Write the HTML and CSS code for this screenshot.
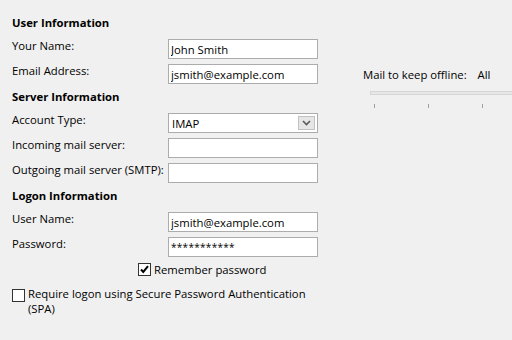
FILE: index.html
```html
<!DOCTYPE html>
<html lang="en">
<head>
    <meta charset="UTF-8">
    <meta name="viewport" content="width=device-width, initial-scale=1.0">
    <title>Account Settings</title>
    <link rel="stylesheet" href="styles.css">
</head>
<body>
    <div class="settings">
        <!-- Account details -->
        <form class="account-form">
            <h3 class="section-title">User Information</h3>
            <div class="field-row">
                <label for="your-name">Your Name:</label>
                <input type="text" id="your-name" class="text-box" value="John Smith">
            </div>
            <div class="field-row">
                <label for="email">Email Address:</label>
                <input type="text" id="email" class="text-box" value="jsmith@example.com">
            </div>

            <h3 class="section-title">Server Information</h3>
            <div class="field-row">
                <label>Account Type:</label>
                <div class="select-box">
                    <span>IMAP</span>
                    <span class="select-button">
                        <svg width="9" height="6" viewBox="0 0 9 6"><path d="M1 1 L4.5 4.5 L8 1" fill="none" stroke="#5a5a5a" stroke-width="1.6"/></svg>
                    </span>
                </div>
            </div>
            <div class="field-row">
                <label for="incoming">Incoming mail server:</label>
                <input type="text" id="incoming" class="text-box">
            </div>
            <div class="field-row">
                <label for="outgoing">Outgoing mail server (SMTP):</label>
                <input type="text" id="outgoing" class="text-box">
            </div>

            <h3 class="section-title">Logon Information</h3>
            <div class="field-row">
                <label for="user-name">User Name:</label>
                <input type="text" id="user-name" class="text-box" value="jsmith@example.com">
            </div>
            <div class="field-row">
                <label for="password">Password:</label>
                <input type="text" id="password" class="text-box password-box" value="***********">
            </div>

            <div class="check-row remember-row">
                <span class="check-box">
                    <svg width="11" height="11" viewBox="0 0 11 11"><path d="M2 5.5 L4.3 8 L9 2.2" fill="none" stroke="#000" stroke-width="2"/></svg>
                </span>
                <span>Remember password</span>
            </div>
            <div class="check-row spa-row">
                <span class="check-box"></span>
                <span class="check-text">Require logon using Secure Password Authentication (SPA)</span>
            </div>
        </form>

        <!-- Offline slider -->
        <div class="offline-panel">
            <div class="offline-label">
                <span>Mail to keep offline:</span>
                <span class="offline-value">All</span>
            </div>
            <div class="slider-track"></div>
            <div class="slider-ticks">
                <span></span>
                <span></span>
                <span></span>
            </div>
        </div>
    </div>
</body>
</html>
```

FILE: styles.css
```css
body {
    margin: 0;
    padding: 0;
    background-color: #f0f0f0;
    color: #000;
    font-family: "Open Sans", "Liberation Sans", sans-serif;
    font-size: 11.3px;
}

.settings {
    display: flex;
    padding-left: 12px;
}

.account-form {
    width: 306px;
    padding-top: 15px;
}

.section-title {
    margin: 0 0 9px 0;
    font-size: 11.3px;
    font-weight: bold;
    line-height: 15px;
}

.field-row {
    display: grid;
    grid-template-columns: 156px 150px;
    align-items: start;
    height: 20px;
    margin-bottom: 5px;
}

.field-row label {
    line-height: 13px;
    white-space: nowrap;
}

.text-box {
    box-sizing: border-box;
    width: 150px;
    height: 20px;
    margin: 0;
    padding: 0 2px;
    border: 1px solid #acacac;
    background-color: #fff;
    font-family: inherit;
    font-size: 11.3px;
    color: #000;
    outline: none;
}

.password-box {
    font-size: 10px;
    letter-spacing: 0.3px;
}

.select-box {
    box-sizing: border-box;
    display: flex;
    align-items: center;
    justify-content: space-between;
    width: 150px;
    height: 20px;
    padding: 0 2px 0 3px;
    border: 1px solid #acacac;
    background-color: #fff;
}

.select-button {
    box-sizing: border-box;
    display: flex;
    align-items: center;
    justify-content: center;
    width: 17px;
    height: 14px;
    border: 1px solid #c2c2c2;
    background-color: #e6e6e6;
}

.check-row {
    display: flex;
    align-items: flex-start;
    gap: 3px;
    line-height: 15px;
}

.check-box {
    box-sizing: border-box;
    display: flex;
    align-items: center;
    justify-content: center;
    flex: none;
    width: 13px;
    height: 13px;
    border: 1px solid #333;
    background-color: #fff;
}

.remember-row {
    margin-left: 126px;
}

.remember-row .check-box {
    margin-top: 1px;
}

.spa-row {
    margin-top: 9px;
}

.spa-row .check-box {
    margin-top: 3px;
}

.check-text {
    width: 290px;
}

.offline-panel {
    flex: 1;
    margin-left: 45px;
    padding-top: 67px;
}

.offline-label {
    line-height: 15px;
    white-space: nowrap;
}

.offline-value {
    margin-left: 8px;
}

.slider-track {
    height: 2px;
    margin: 9px 0 0 7px;
    border: 1px solid #d6d6d6;
    border-right: none;
    background-color: #e7e7e7;
}

.slider-ticks {
    display: flex;
    gap: 53px;
    margin: 9px 0 0 11px;
}

.slider-ticks span {
    width: 1px;
    height: 4px;
    background-color: #a0a0a0;
}
```
